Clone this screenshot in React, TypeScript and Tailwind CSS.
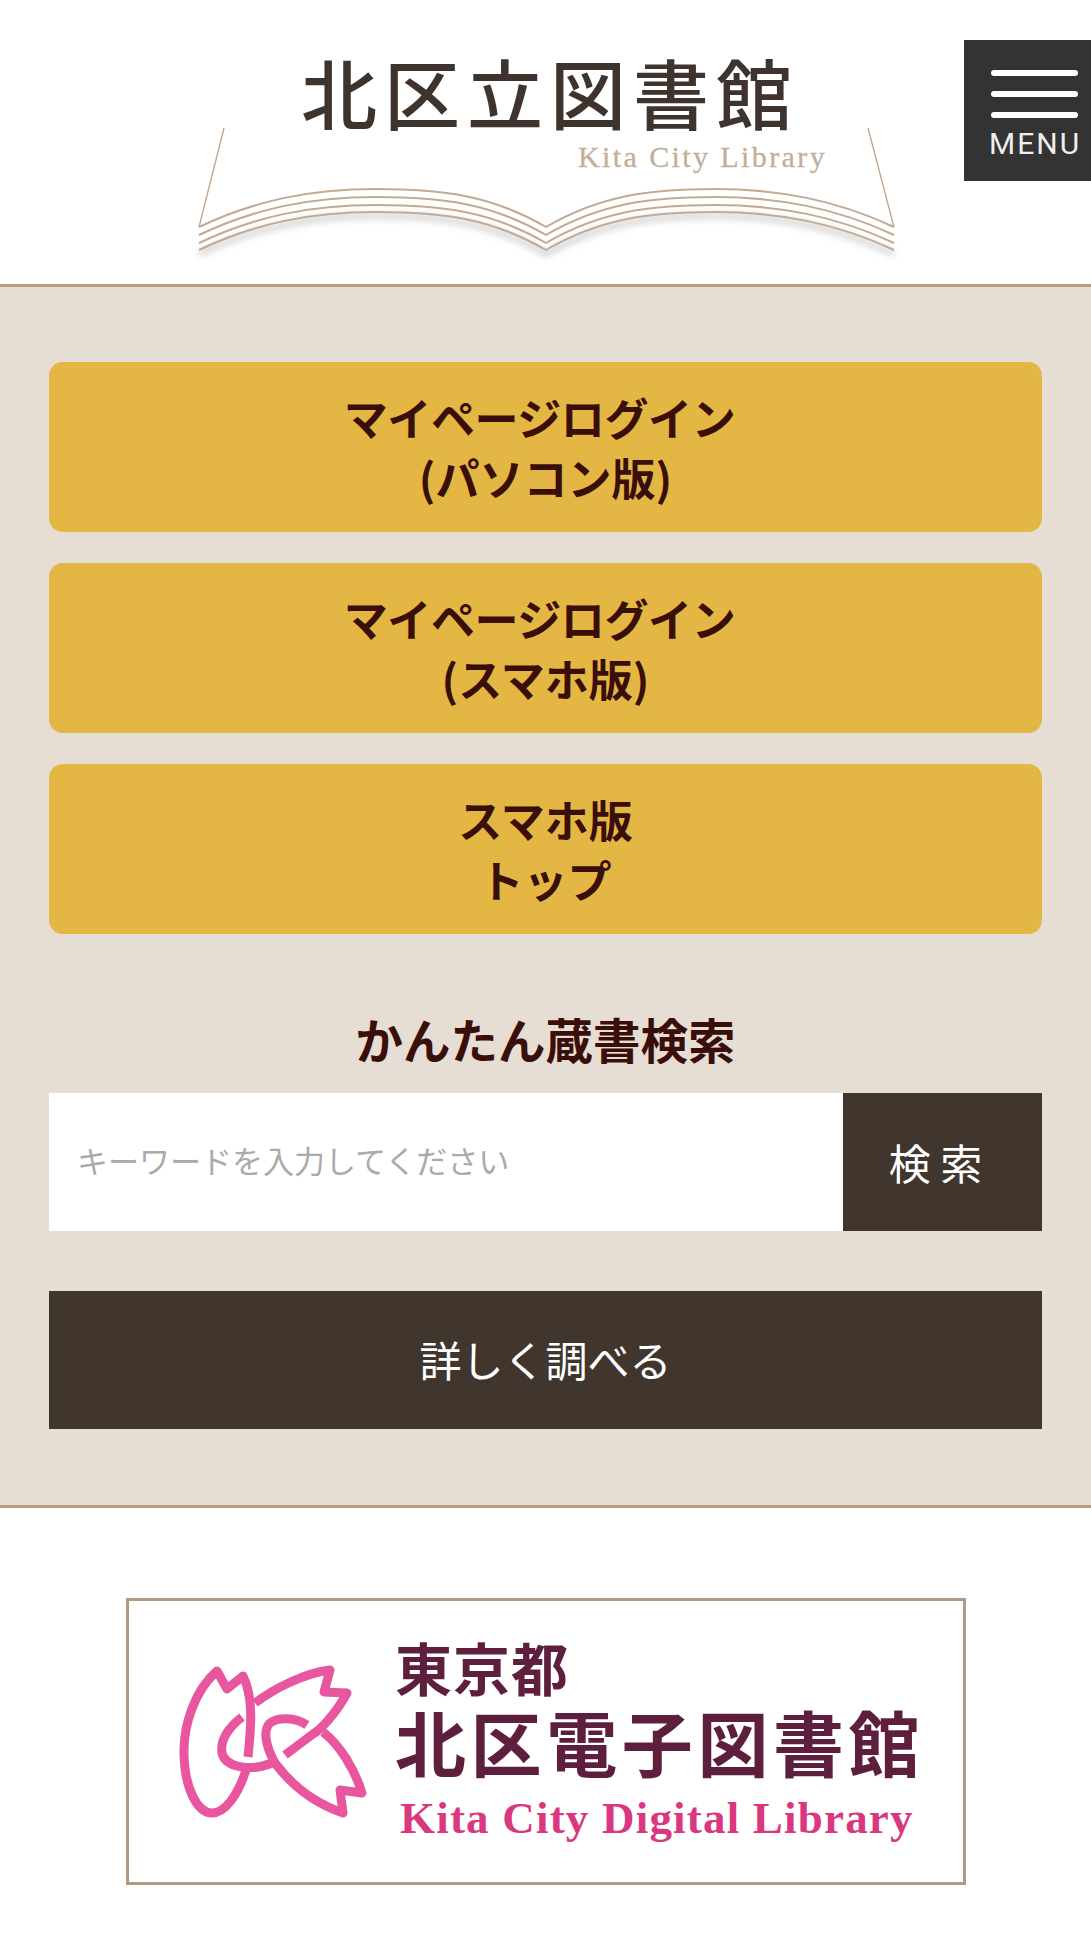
const cjk = "font-['Noto_Sans_CJK_JP',sans-serif]";

const loginButtons = [
  ['マイページログイン', '(パソコン版)'],
  ['マイページログイン', '(スマホ版)'],
  ['スマホ版', 'トップ'],
];

function BookLogo() {
  const curves = [0, 8, 16, 23].map((dy) => (
    <g key={dy} transform={`translate(0 ${dy})`}>
      <path d="M198 227C255 200 310 189 375 189S490 195 545 227C600 195 650 189 714 189S835 200 893 227" />
    </g>
  ));
  return (
    <svg width="720" height="284" viewBox="185 0 720 284" className="block">
      <defs>
        <filter id="page-shadow" x="-10%" y="-50%" width="120%" height="200%">
          <feGaussianBlur stdDeviation="3.5" />
        </filter>
      </defs>
      <path
        d="M198 254C255 227 310 216 375 216S490 222 545 254C600 222 650 216 714 216S835 227 893 254"
        fill="none"
        stroke="#8f8f8f"
        strokeOpacity="0.45"
        strokeWidth="5"
        filter="url(#page-shadow)"
      />
      <path d="M223 128L198 227M867 128L893 227" fill="none" stroke="#bda48c" strokeWidth="1.3" />
      <g fill="none" stroke="#c2aa94" strokeWidth="2">
        {curves}
      </g>
      <text
        x="300"
        y="124"
        fontSize="76"
        fontWeight="500"
        letterSpacing="7"
        fill="#3e342d"
        fontFamily="'Noto Sans CJK JP', sans-serif"
      >
        北区立図書館
      </text>
      <text
        x="577"
        y="167"
        fontSize="30"
        letterSpacing="2.4"
        fill="#c4ae99"
        stroke="#c4ae99"
        strokeWidth="0.3"
        fontFamily="'Liberation Serif', serif"
      >
        Kita City Library
      </text>
    </svg>
  );
}

function SakuraMark() {
  return (
    <svg width="210" height="190" viewBox="0 0 210 190" className="block shrink-0 blur-[0.5px]">
      <g fill="none" stroke="#e8569f" strokeWidth="9" strokeLinejoin="round" strokeLinecap="butt">
        <path d="M78 107C80 85 85 50 73 26L57 39L47 21C25 40 13 75 14 105C15 140 28 163 42 163C55 163 68 145 76 120" />
        <path d="M85 53C105 38 135 23 160 20L154 42L177 43C165 65 150 80 143 84L115 105" />
        <path d="M153 82C170 95 185 120 192 143L170 140L173 163C150 155 125 140 105 113C95 95 93 80 100 73C108 67 125 67 137 75" />
        <path d="M72 67C58 78 50 90 52 103C55 117 80 122 102 113" />
      </g>
    </svg>
  );
}

export default function App() {
  return (
    <div className={`w-[1091px] h-[1939px] bg-white ${cjk}`}>
      {/* header */}
      <header className="relative h-[284px] flex justify-center">
        <BookLogo />
        <button className="absolute right-0 top-10 w-[127px] h-[141px] bg-[#333333] pt-[30px] pl-[27px] flex flex-col items-start">
          <span className="block w-[87px] h-[6px] rounded-full bg-white" />
          <span className="block w-[87px] h-[6px] rounded-full bg-white mt-[15px]" />
          <span className="block w-[87px] h-[6px] rounded-full bg-white mt-[15px]" />
          <span className="block mt-[11px] -ml-[2px] font-['Roboto',sans-serif] font-normal text-[30px] leading-[30px] tracking-[2px] text-[#eeeeee]">
            MENU
          </span>
        </button>
      </header>

      {/* main */}
      <section className="bg-[#e6ddd4] border-y-[3px] border-[#b89d82] px-[49px] pt-[75px] pb-[76px]">
        <div className="flex flex-col gap-[31px]">
          {loginButtons.map((lines, i) => (
            <a
              key={i}
              className="h-[170px] rounded-[14px] bg-[#e4b644] flex flex-col items-center justify-center text-[44px] leading-[60px] font-bold text-[#3a0f0a]"
            >
              <span className={i < 2 ? 'mr-[12px] tracking-[-0.4px]' : ''}>{lines[0]}</span>
              <span>{lines[1]}</span>
            </a>
          ))}
        </div>

        <h2 className="mt-[72px] text-center text-[47.5px] leading-[66px] font-bold text-[#3a0f0a]">
          かんたん蔵書検索
        </h2>
        <form className="mt-[21px] flex h-[138px]">
          <input
            placeholder="キーワードを入力してください"
            className="flex-1 min-w-0 bg-white pl-7 pb-[4px] text-[31px] outline-none placeholder:text-[#aaaaaa]"
          />
          <button type="button" className="w-[199px] bg-[#41362e] text-white text-[42px] font-normal pr-[14px] pb-[2px]">
            検 索
          </button>
        </form>
        <button
          type="button"
          className="mt-[60px] block w-full h-[138px] bg-[#41362e] text-white text-[42px] font-normal pb-[4px]"
        >
          詳しく調べる
        </button>
      </section>

      {/* banner */}
      <a className="mt-[90px] ml-[126px] w-[840px] h-[287px] border-[3px] border-[#b19a80] flex items-start">
        <div className="ml-[41px] mt-[49px]">
          <SakuraMark />
        </div>
        <div className="ml-[15px] mt-[33px] flex flex-col">
          <span className="text-[57px] leading-[64px] font-bold tracking-[1px] text-[#5e1f3e]">東京都</span>
          <span className="mt-[1px] text-[71px] leading-[82px] font-bold tracking-[4.6px] whitespace-nowrap text-[#5e1f3e]">
            北区電子図書館
          </span>
          <span className="mt-[12px] ml-[5px] font-['Liberation_Serif',serif] font-bold text-[45px] leading-[50px] tracking-[1.2px] whitespace-nowrap text-[#d9387f]">
            Kita City Digital Library
          </span>
        </div>
      </a>
    </div>
  );
}
